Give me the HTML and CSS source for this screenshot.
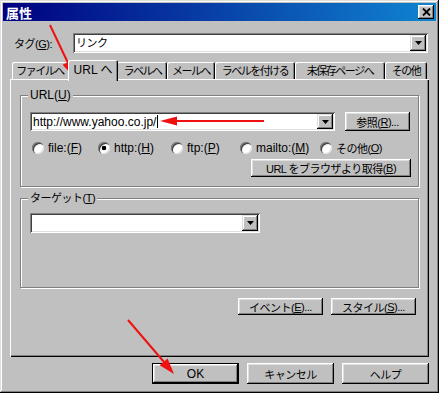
FILE: index.html
```html
<!DOCTYPE html>
<html lang="ja">
<head>
    <meta charset="UTF-8">
    <meta name="viewport" content="width=device-width, initial-scale=1.0">
    <title>属性</title>
    <link rel="stylesheet" href="styles.css">
</head>
<body>
    <div class="window">
        <div class="titlebar">
            <span class="title">属性</span>
            <span class="close-btn">
                <svg width="9" height="8" viewBox="0 0 9 8"><path d="M1 0.5 L8 7.5 M8 0.5 L1 7.5" stroke="#000" stroke-width="1.8"/></svg>
            </span>
        </div>
        <div class="dialog">
            <div class="tag-row">
                <label class="tag-label ja">タグ(<u>G</u>):</label>
                <div class="combo tag-combo">
                    <span class="combo-text ja">リンク</span>
                    <span class="drop-btn"><svg width="7" height="4" viewBox="0 0 7 4"><path d="M0 0 H7 L3.5 4 Z" fill="#000"/></svg></span>
                </div>
            </div>

            <div class="tabs">
                <div class="tab tab-file">ファイルへ</div>
                <div class="tab active">URL へ</div>
                <div class="tab tab-label">ラベルへ</div>
                <div class="tab tab-mail">メールへ</div>
                <div class="tab tab-attach">ラベルを付ける</div>
                <div class="tab tab-unsaved">未保存ページへ</div>
                <div class="tab tab-other">その他</div>
            </div>

            <div class="panel">
                <fieldset class="group url-group">
                    <legend>URL(<u>U</u>)</legend>
                    <div class="url-row">
                        <div class="combo url-combo">
                            <span class="combo-text">http://www.yahoo.co.jp/<span class="caret"></span></span>
                            <span class="drop-btn"><svg width="7" height="4" viewBox="0 0 7 4"><path d="M0 0 H7 L3.5 4 Z" fill="#000"/></svg></span>
                        </div>
                        <button class="btn ref-btn ja">参照(<u>R</u>)...</button>
                    </div>
                    <div class="radio-row">
                        <label class="radio r-file"><span class="radio-dot"></span>file:(<u>F</u>)</label>
                        <label class="radio r-http"><span class="radio-dot checked"></span>http:(<u>H</u>)</label>
                        <label class="radio r-ftp"><span class="radio-dot"></span>ftp:(<u>P</u>)</label>
                        <label class="radio r-mail"><span class="radio-dot"></span>mailto:(<u>M</u>)</label>
                        <label class="radio ja"><span class="radio-dot"></span>その他(<u>O</u>)</label>
                    </div>
                    <div class="fetch-row">
                        <button class="btn fetch-btn ja">URL をブラウザより取得(<u>B</u>)</button>
                    </div>
                </fieldset>

                <fieldset class="group target-group">
                    <legend class="ja">ターゲット(<u>T</u>)</legend>
                    <div class="combo target-combo">
                        <span class="combo-text"></span>
                        <span class="drop-btn"><svg width="7" height="4" viewBox="0 0 7 4"><path d="M0 0 H7 L3.5 4 Z" fill="#000"/></svg></span>
                    </div>
                </fieldset>

                <div class="panel-actions">
                    <button class="btn small-btn ja">イベント(<u>E</u>)...</button>
                    <button class="btn small-btn ja">スタイル(<u>S</u>)...</button>
                </div>
            </div>

            <div class="dialog-actions">
                <button class="btn big-btn default">OK</button>
                <button class="btn big-btn ja">キャンセル</button>
                <button class="btn big-btn ja">ヘルプ</button>
            </div>
        </div>

        <!-- red annotation arrows drawn over the dialog -->
        <svg class="arrows" width="439" height="393" viewBox="0 0 439 393">
            <g stroke="#f01010" stroke-width="2" fill="none">
                <line x1="50" y1="25" x2="68" y2="63"/>
                <line x1="264" y1="121" x2="175" y2="121"/>
                <line x1="128" y1="320" x2="164" y2="362"/>
            </g>
            <g fill="#f01010">
                <polygon points="74,77 62.6,64.8 72.4,60.2"/>
                <polygon points="160,121 177,116.5 177,125.5"/>
                <polygon points="174,374 159.6,365.2 167.6,358.4"/>
            </g>
        </svg>
    </div>
</body>
</html>
```

FILE: styles.css
```css
body {
    margin: 0;
    font-family: "Liberation Sans", "Noto Sans CJK JP", sans-serif;
    font-size: 12px;
    color: #000;
    background: #c0c0c0;
}
u {
    text-decoration: underline;
}
.ja {
    font-size: 11px;
    letter-spacing: -0.5px;
}
.window {
    position: relative;
    width: 439px;
    height: 393px;
    box-sizing: border-box;
    padding: 3px;
    background: #c0c0c0;
    box-shadow: inset -1px -1px #000, inset 1px 1px #dfdfdf, inset -2px -2px #808080, inset 2px 2px #fff;
}
.titlebar {
    height: 18px;
    display: flex;
    align-items: center;
    justify-content: space-between;
    padding: 0 2px 0 3px;
    background: linear-gradient(to right, #000080, #1084d0);
    color: #fff;
    font-weight: bold;
    font-size: 13px;
}
.close-btn {
    width: 16px;
    height: 14px;
    display: flex;
    align-items: center;
    justify-content: center;
    background: #c0c0c0;
    box-shadow: inset -1px -1px #000, inset 1px 1px #fff, inset -2px -2px #808080, inset 2px 2px #dfdfdf;
}
.dialog {
    padding: 12px 7px 0;
}
.tag-row {
    display: flex;
    align-items: center;
    height: 20px;
    padding-left: 4px;
}
.tag-label {
    width: 59px;
}
.combo {
    display: flex;
    align-items: center;
    justify-content: space-between;
    box-sizing: border-box;
    padding: 2px;
    background: #fff;
    box-shadow: inset 1px 1px #808080, inset -1px -1px #fff, inset 2px 2px #404040, inset -2px -2px #dfdfdf;
}
.combo-text {
    padding-left: 1px;
    line-height: 14px;
    display: flex;
    align-items: center;
}
.caret {
    display: inline-block;
    width: 1px;
    height: 13px;
    margin-left: 1px;
    background: #000;
}
.drop-btn {
    width: 16px;
    height: 100%;
    display: flex;
    align-items: center;
    justify-content: center;
    background: #c0c0c0;
    box-shadow: inset -1px -1px #000, inset 1px 1px #dfdfdf, inset -2px -2px #808080, inset 2px 2px #fff;
}
.tag-combo {
    width: 355px;
    height: 20px;
}
.tabs {
    display: flex;
    align-items: flex-end;
    height: 19px;
    margin-top: 7px;
    padding-left: 2px;
}
.tab {
    flex-shrink: 0;
    height: 17px;
    box-sizing: border-box;
    display: flex;
    align-items: center;
    justify-content: center;
    padding-bottom: 1px;
    font-size: 11px;
    letter-spacing: -1.5px;
    white-space: nowrap;
    background: #c0c0c0;
    border-radius: 2px 2px 0 0;
    box-shadow: inset 1px 1px #fff, inset -1px 0 #000, inset -2px 0 #808080;
}
.tab-file { width: 58px; padding-right: 2px; }
.tab-label { width: 51px; padding-left: 2px; }
.tab-mail { width: 48px; }
.tab-attach { width: 80px; }
.tab-unsaved { width: 90px; }
.tab-other { width: 42px; }
.tab.active {
    position: relative;
    z-index: 1;
    width: 50px;
    height: 21px;
    margin: 0 -2px -2px;
    padding-bottom: 4px;
    font-size: 12px;
    letter-spacing: 0;
}
.panel {
    height: 278px;
    box-sizing: border-box;
    padding: 10px 10px 0;
    box-shadow: inset 1px 1px #fff, inset -1px -1px #000, inset -2px -2px #808080;
}
.group {
    margin: 0;
    min-width: 0;
    border: 1px solid #808080;
    box-shadow: inset 1px 1px #fff, 1px 1px #fff;
}
.group legend {
    padding: 0 2px;
    margin-left: -2px;
    line-height: 12px;
    background: #c0c0c0;
}
.url-group {
    padding: 11px 4px 9px 9px;
}
.url-row {
    display: flex;
    gap: 10px;
}
.url-combo {
    width: 305px;
    height: 19px;
}
.btn {
    font-family: inherit;
    color: #000;
    border: 0;
    padding: 0;
    background: #c0c0c0;
    box-shadow: inset -1px -1px #000, inset 1px 1px #fff, inset -2px -2px #808080, inset 2px 2px #dfdfdf;
    display: flex;
    align-items: center;
    justify-content: center;
    white-space: nowrap;
}
.ref-btn {
    width: 65px;
    height: 19px;
}
.radio-row {
    display: flex;
    align-items: center;
    height: 14px;
    margin-top: 10px;
    padding-left: 2px;
}
.radio {
    display: flex;
    align-items: center;
    white-space: nowrap;
}
.r-file { width: 66px; }
.r-http { width: 73px; }
.r-ftp { width: 69px; }
.r-mail { width: 80px; }
.radio-dot {
    width: 12px;
    height: 12px;
    margin-right: 4px;
    box-sizing: border-box;
    border-radius: 50%;
    background: #fff;
    box-shadow: inset 1px 1px #808080, inset 2px 2px #404040, inset -1px -1px #dfdfdf;
}
.radio-dot.checked {
    background: radial-gradient(circle, #000 2px, #fff 2.6px);
}
.fetch-row {
    display: flex;
    justify-content: flex-end;
    margin-top: 4px;
    padding-right: 3px;
}
.fetch-btn {
    width: 160px;
    height: 18px;
}
.target-group {
    margin-top: 5px;
    padding: 9px 4px 54px 9px;
}
.target-combo {
    width: 230px;
    height: 20px;
}
.panel-actions {
    display: flex;
    justify-content: flex-end;
    gap: 8px;
    margin-top: 10px;
    padding-right: 3px;
}
.small-btn {
    width: 85px;
    height: 17px;
}
.dialog-actions {
    display: flex;
    justify-content: flex-end;
    gap: 8px;
    margin-top: 6px;
}
.big-btn {
    width: 87px;
    height: 21px;
    font-size: 12px;
}
.big-btn.ja {
    font-size: 11px;
}
.btn.default {
    box-sizing: border-box;
    border: 1px solid #000;
}
.arrows {
    position: absolute;
    top: 0;
    left: 0;
    pointer-events: none;
}
```
